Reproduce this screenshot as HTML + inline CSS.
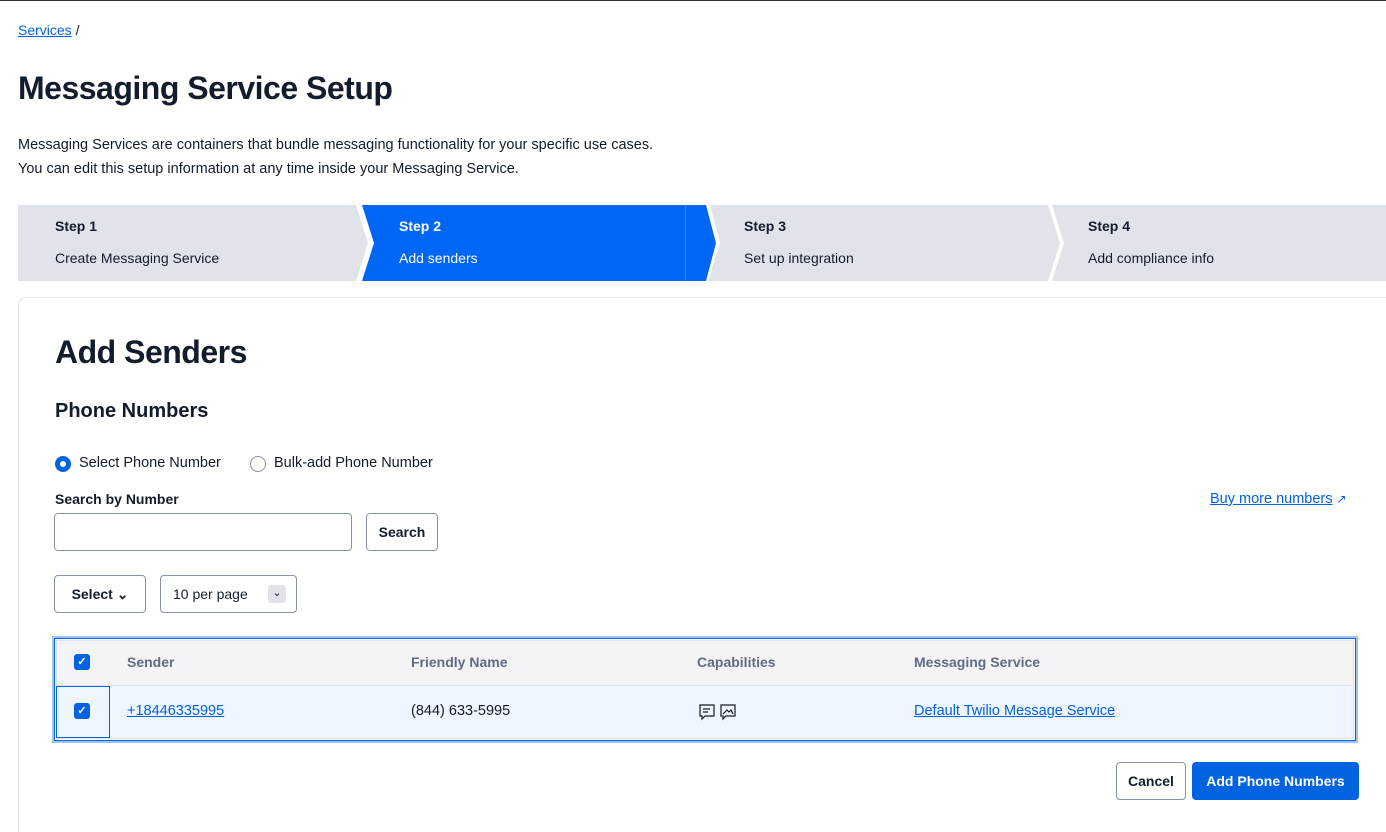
<!DOCTYPE html>
<html><head><meta charset="utf-8"><style>
*{box-sizing:border-box;margin:0;padding:0}
html,body{width:1386px;height:832px;overflow:hidden}
body{background:#fff;font-family:"Liberation Sans",sans-serif;color:#121c2d;position:relative}
.a{position:absolute;white-space:nowrap}
a{color:#0263e0;text-decoration:underline}
.btn{position:absolute;border:1px solid #8891aa;border-radius:4px;background:#fff;font-weight:bold;font-size:14px;display:flex;align-items:center;justify-content:center}
</style></head><body>
<div class="a" style="left:0;top:0;width:1386px;height:1px;background:#333"></div>
<div class="a" style="left:18px;top:22px;font-size:14px"><a>Services</a> /</div>
<div class="a" style="left:18px;top:70px;font-size:32px;font-weight:bold;letter-spacing:-0.5px">Messaging Service Setup</div>
<div class="a" style="left:18px;top:133px;font-size:14.5px;line-height:24px">Messaging Services are containers that bundle messaging functionality for your specific use cases.<br>You can edit this setup information at any time inside your Messaging Service.</div>
<svg class="a" style="left:0;top:205px" width="1386" height="76">
<polygon points="18,0 356,0 368,38 356,76 18,76" fill="#e1e3ea"/>
<polygon points="362,0 706,0 716,38 706,76 362,76 374,38" fill="#0066f5"/>
<line x1="685.5" y1="0" x2="685.5" y2="76" stroke="#3d85f0"/>
<polygon points="710,0 1048,0 1060,38 1048,76 708,76 720,38" fill="#e1e3ea"/>
<polygon points="1052,0 1386,0 1386,76 1052,76 1064,38" fill="#e1e3ea"/>
</svg>
<div class="a" style="left:55px;top:218px;font-size:14px;font-weight:bold">Step 1</div>
<div class="a" style="left:55px;top:250px;font-size:14px">Create Messaging Service</div>
<div class="a" style="left:399px;top:218px;font-size:14px;font-weight:bold;color:#fff">Step 2</div>
<div class="a" style="left:399px;top:250px;font-size:14px;color:#fff">Add senders</div>
<div class="a" style="left:744px;top:218px;font-size:14px;font-weight:bold">Step 3</div>
<div class="a" style="left:744px;top:250px;font-size:14px">Set up integration</div>
<div class="a" style="left:1088px;top:218px;font-size:14px;font-weight:bold">Step 4</div>
<div class="a" style="left:1088px;top:250px;font-size:14px">Add compliance info</div>
<div class="a" style="left:18px;top:297px;width:1380px;height:560px;border:1px solid #e1e3ea;border-radius:8px"></div>
<div class="a" style="left:55px;top:334px;font-size:32px;font-weight:bold;letter-spacing:-0.5px">Add Senders</div>
<div class="a" style="left:55px;top:400px;font-size:20px;font-weight:bold">Phone Numbers</div>
<div class="a" style="left:55px;top:456px;width:16px;height:16px;border-radius:50%;background:#0263e0"><div style="margin:5px;width:6px;height:6px;border-radius:50%;background:#fff"></div></div>
<div class="a" style="left:79px;top:455px;font-size:14.5px">Select Phone Number</div>
<div class="a" style="left:250px;top:456px;width:16px;height:16px;border-radius:50%;border:1px solid #8891aa"></div>
<div class="a" style="left:274px;top:455px;font-size:14.5px">Bulk-add Phone Number</div>
<div class="a" style="left:55px;top:491px;font-size:14px;font-weight:bold">Search by Number</div>
<div class="a" style="left:1210px;top:491px;font-size:14.5px"><a>Buy more numbers</a> <span style="color:#0263e0;font-size:12px">↗</span></div>
<div class="a" style="left:54px;top:513px;width:298px;height:38px;border:1px solid #8891aa;border-radius:4px"></div>
<div class="btn" style="left:366px;top:513px;width:72px;height:38px">Search</div>
<div class="btn" style="left:54px;top:575px;width:92px;height:38px">Select&nbsp;⌄</div>
<div class="btn" style="left:160px;top:575px;width:137px;height:38px;justify-content:flex-start;padding-left:12px;font-weight:normal">10 per page<span style="position:absolute;right:10px;top:9px;width:18px;height:18px;background:#e1e3ea;border-radius:3px;font-size:11px;text-align:center;line-height:16px">⌄</span></div>
<div class="a" style="left:52px;top:636px;width:1306px;height:107px;border:2px solid #9ec4f5"></div>
<div class="a" style="left:54px;top:638px;width:1302px;height:103px;border:1px solid #0263e0"></div>
<div class="a" style="left:56px;top:640px;width:1298px;height:46px;background:#f4f4f6;border:1px solid #e1e3ea"></div>
<div class="a" style="left:56px;top:685px;width:1298px;height:54px;background:#eff6ff;border:1px solid #e1e3ea"></div>
<div class="a" style="left:56px;top:686px;width:54px;height:52px;border:1px solid #0263e0"></div>
<div class="a" style="left:74px;top:654px;width:16px;height:16px;background:#0263e0;border-radius:3px;color:#fff;font-size:11px;text-align:center;line-height:16px;font-weight:bold">✓</div>
<div class="a" style="left:74px;top:703px;width:16px;height:16px;background:#0263e0;border-radius:3px;color:#fff;font-size:11px;text-align:center;line-height:16px;font-weight:bold">✓</div>
<div class="a" style="left:127px;top:654px;font-size:14px;font-weight:bold;color:#606b85">Sender</div>
<div class="a" style="left:411px;top:654px;font-size:14px;font-weight:bold;color:#606b85">Friendly Name</div>
<div class="a" style="left:697px;top:654px;font-size:14px;font-weight:bold;color:#606b85">Capabilities</div>
<div class="a" style="left:914px;top:654px;font-size:14px;font-weight:bold;color:#606b85">Messaging Service</div>
<div class="a" style="left:127px;top:703px;font-size:14.5px"><a>+18446335995</a></div>
<div class="a" style="left:411px;top:703px;font-size:14.5px">(844) 633-5995</div>
<svg class="a" style="left:699px;top:704px" width="40" height="18" fill="none" stroke="#121c2d" stroke-width="1.2">
<path d="M1 1h14v11H6l-3 3v-3H1z"/><path d="M4 5h7M4 8h5"/>
<path d="M22 1h14v11H27l-3 3v-3h-2z"/><path d="M24 10l4-4 2 2 2-2 2 4"/>
</svg>
<div class="a" style="left:914px;top:703px;font-size:14.5px"><a>Default Twilio Message Service</a></div>
<div class="btn" style="left:1116px;top:762px;width:70px;height:38px">Cancel</div>
<div class="btn" style="left:1192px;top:762px;width:167px;height:38px;background:#0263e0;border-color:#0263e0;color:#fff">Add Phone Numbers</div>
</body></html>
